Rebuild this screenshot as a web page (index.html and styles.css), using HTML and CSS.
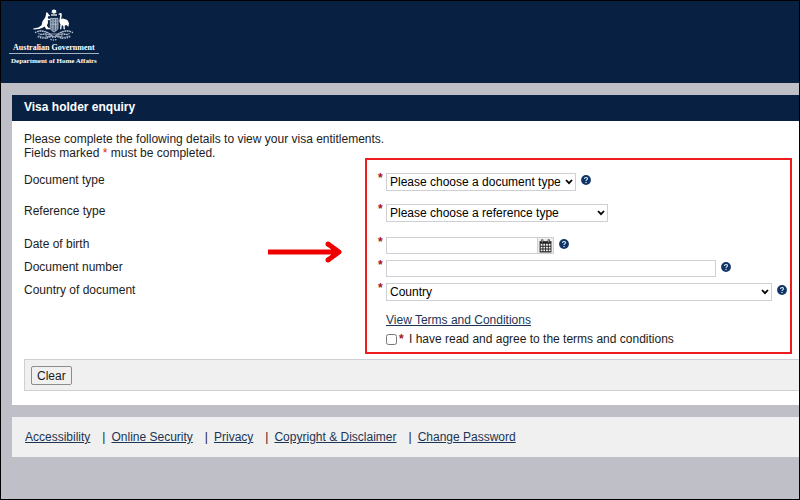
FILE: index.html
```html
<!DOCTYPE html>
<html lang="en">
    <head>
        <meta charset="UTF-8">
        <meta name="viewport" content="width=device-width, initial-scale=1.0">
        <title>Visa holder enquiry</title>
        <link rel="stylesheet" href="styles.css">
    </head>
    <body>
        <svg class="symbols" aria-hidden="true">
            <symbol id="help-icon" viewBox="0 0 10 10">
                <circle cx="5" cy="5" r="4.9" fill="#0f3566"/>
                <path d="M3.5 3.9C3.5 2 6.5 2 6.5 3.8C6.5 4.9 5 4.8 5 6" fill="none" stroke="#dfe8f2" stroke-width="1.1"/>
                <circle cx="5" cy="7.5" r=".7" fill="#dfe8f2"/>
            </symbol>
        </svg>
        <header class="header">
            <div class="brand">
                <svg class="crest" viewBox="0 0 44 32" aria-hidden="true">
                    <path d="M22 0L22.8 1.1L24.2 .9L23.9 2.2L24.8 3.2L23.5 3.7L22.9 4.9L22 4L21.1 4.9L20.5 3.7L19.2 3.2L20.1 2.2L19.8 .9L21.2 1.1Z" fill="#fff"/>
                    <path d="M19 6H25" stroke="#dfe4ea" stroke-width="1.4"/>
                    <!-- kangaroo -->
                    <path d="M14.2 3L15.2 4.1L16 3.4L16.3 5L18 6.4L17.6 7.3L16 7.3L15.9 9.5L18.4 10L18.3 11L15.8 11.2L16 14L14.9 16.4L16.2 18.6L18 19.3V20.2H14.2L12.6 17.4L10.6 18.8L7 20L1.5 20.4L1.2 19.4L6.4 18.6L9.6 16.2L10.4 12.4L13.3 8.2L14 5.6Z" fill="#fff"/>
                    <!-- emu -->
                    <path d="M26.2 5.2L28 3.9L29.5 4.3L29.8 6.2L29.2 10L31 9.4L35.4 11.1L37 14.2L36.3 18L34.6 16.1L32.6 16.8L33 20.2H31.6L31.2 16.7L29.8 16.2L29.3 20.2H28L28.4 15.6L27.3 12.6L28.2 6.1Z" fill="#fff"/>
                    <!-- shield -->
                    <path d="M18.3 9.4H26V18.8C26 21 23.7 22 22.1 23C20.5 22 18.3 21 18.3 18.8Z" fill="#5c6f89" stroke="#c3cbd6" stroke-width=".8"/>
                    <path d="M20.9 9.8V21.6M23.5 9.8V21.6M18.6 15.2H25.8M19.2 12.1H20.4M21.6 12.3H22.9M24.2 12.1H25.3M19.2 18.1H20.4M24.2 18.1H25.3" stroke="#c3cbd6" stroke-width=".7"/>
                    <!-- wattle and scroll -->
                    <g fill="none" stroke="#8d9bb0" stroke-width="1">
                        <path d="M21.5 27.5C17 23 10 20.6 4.8 22.6M19 25.4C15 29 10 29 6.5 26.6M15 23.4C12 26 8 25.7 5.8 24.2M17 27L14.2 30"/>
                        <path d="M22.5 27.5C27 23 34 20.6 39.2 22.6M25 25.4C29 29 34 29 37.5 26.6M29 23.4C32 26 36 25.7 38.2 24.2M27 27L29.8 30"/>
                        <path d="M14 25.8L18.5 25L25.5 25L30 25.8L29.5 28L25 27.4L19 27.4L14.5 28Z"/>
                    </g>
                    <g fill="none" stroke="#b8c3d0" stroke-width="1.5" stroke-linecap="round" stroke-dasharray=".1 2.3">
                        <path d="M3.6 23.4C10 20 17 23.4 21 28.5M6.2 27.8C10 29.8 14.5 29.5 18 28M9 25.6L15 25"/>
                        <path d="M40.4 23.4C34 20 27 23.4 23 28.5M37.8 27.8C34 29.8 29.5 29.5 26 28M35 25.6L29 25"/>
                        <path d="M19 30.5L22 31L25 30.5"/>
                    </g>
                </svg>
                <span class="brand-government">Australian Government</span>
                <span class="brand-department">Department of Home Affairs</span>
            </div>
        </header>
        <main class="panel">
            <h1 class="panel-title">Visa holder enquiry</h1>
            <form class="enquiry">
                <p class="intro">Please complete the following details to view your visa entitlements.<br>
                Fields marked <span class="marked">*</span> must be completed.</p>
                <div class="fields">
                    <div class="row row-tall">
                        <label for="document-type">Document type</label>
                        <div class="control">
                            <span class="required">*</span>
                            <select class="document-type" id="document-type"><option>Please choose a document type</option></select>
                            <svg class="help"><use href="#help-icon"/></svg>
                        </div>
                    </div>
                    <div class="row row-reference">
                        <label for="reference-type">Reference type</label>
                        <div class="control">
                            <span class="required">*</span>
                            <select class="reference-type" id="reference-type"><option>Please choose a reference type</option></select>
                        </div>
                    </div>
                    <div class="row">
                        <label for="birth-date">Date of birth</label>
                        <div class="control">
                            <span class="required">*</span>
                            <div class="date-group">
                                <input class="birth-date" id="birth-date" type="text">
                                <button class="calendar" type="button" aria-label="Choose date">
                                    <svg viewBox="0 0 12 13" aria-hidden="true">
                                        <path d="M.5 2H11.5V12.5H.5Z" fill="#222"/>
                                        <path d="M3 .5V3M9 .5V3" stroke="#222" stroke-width="2"/>
                                        <path d="M3 1V3M9 1V3" stroke="#eee" stroke-width=".7"/>
                                        <path d="M1.5 4.5H3.2V6.2H1.5ZM4 4.5H5.7V6.2H4ZM6.5 4.5H8.2V6.2H6.5ZM9 4.5H10.7V6.2H9ZM1.5 7.1H3.2V8.8H1.5ZM4 7.1H5.7V8.8H4ZM6.5 7.1H8.2V8.8H6.5ZM9 7.1H10.7V8.8H9ZM1.5 9.7H3.2V11.4H1.5ZM4 9.7H5.7V11.4H4ZM6.5 9.7H8.2V11.4H6.5ZM9 9.7H10.7V11.4H9Z" fill="#f3f1ee"/>
                                    </svg>
                                </button>
                            </div>
                            <svg class="help"><use href="#help-icon"/></svg>
                        </div>
                    </div>
                    <div class="row">
                        <label for="document-number">Document number</label>
                        <div class="control">
                            <span class="required">*</span>
                            <input class="document-number" id="document-number" type="text">
                            <svg class="help"><use href="#help-icon"/></svg>
                        </div>
                    </div>
                    <div class="row">
                        <label for="country">Country of document</label>
                        <div class="control">
                            <span class="required">*</span>
                            <select class="country" id="country"><option>Country</option></select>
                            <svg class="help"><use href="#help-icon"/></svg>
                        </div>
                    </div>
                    <div class="terms">
                        <a href="#">View Terms and Conditions</a>
                        <div class="agree">
                            <input type="checkbox" id="agree">
                            <span class="required">*</span>
                            <label for="agree">I have read and agree to the terms and conditions</label>
                        </div>
                    </div>
                    <div class="highlight"></div>
                    <svg class="arrow" viewBox="0 0 74 22" aria-hidden="true">
                        <path d="M0 11H70M60 3L71 11L60 19" fill="none" stroke="#ee0000" stroke-width="5" stroke-linejoin="round"/>
                        <path d="M60 3V3M60 19V19" stroke="#ee0000" stroke-width="5" stroke-linecap="round"/>
                    </svg>
                </div>
                <div class="actions">
                    <button class="clear" type="reset">Clear</button>
                </div>
            </form>
        </main>
        <footer class="footer">
            <a href="#">Accessibility</a>
            <a href="#">Online Security</a>
            <a href="#">Privacy</a>
            <a href="#">Copyright &amp; Disclaimer</a>
            <a href="#">Change Password</a>
        </footer>
    </body>
</html>
```

FILE: styles.css
```css
:root {
    --navy: #082143;
    --line: #cfcfd6;
}

* {
    box-sizing: border-box;
}

body {
    margin: 0;
    min-height: 100vh;
    border: 1px solid #000;
    background: #bfbfc8;
    color: #1c1c1c;
    font-family: "Liberation Sans", Arial, sans-serif;
    font-size: 12px;
    line-height: 14px;
}

a {
    color: #1c3554;
}

.symbols {
    display: none;
}

.header {
    padding: 8px;
    height: 82px;
    background: var(--navy);
}

.brand {
    display: flex;
    flex-direction: column;
    align-items: center;
    width: fit-content;
    color: #fff;
    font-family: "Liberation Serif", "Times New Roman", serif;
    font-size: 8px;
    font-weight: bold;
    line-height: 11px;
}

.crest {
    width: 44px;
    height: 32px;
}

.brand-department {
    border-top: 1px solid #a5b0be;
    padding: 2px 2px 0;
    font-size: 7px;
}

.brand-government {
    padding-top: 1px;
}

.panel {
    margin: 12px 0 12px 11px;
    background: #fff;
}

.panel-title {
    margin: 0;
    padding: 5px 12px 7px;
    background: var(--navy);
    color: #fff;
    font-size: 12px;
    line-height: 14px;
}

.enquiry {
    padding: 11px 0 14px 12px;
}

.intro {
    margin: 0;
}

.marked {
    color: #e02020;
}

.fields {
    position: relative;
    padding-top: 13px;
}

.row {
    display: grid;
    grid-template-columns: 354px 1fr;
    min-height: 23px;
}

.row-tall {
    min-height: 31px;
}

.row-reference {
    min-height: 33px;
}

.control {
    display: flex;
    align-items: flex-start;
}

.required {
    width: 8px;
    color: #a3141c;
    font-weight: bold;
    line-height: 10px;
}

select, input, button {
    font: inherit;
    color: inherit;
}

select {
    appearance: none;
    height: 18px;
    border: 1px solid var(--line);
    border-radius: 0;
    padding: 0 14px 0 3px;
    background: #fff url("data:image/svg+xml,%3Csvg xmlns='http://www.w3.org/2000/svg' viewBox='0 0 8 6'%3E%3Cpath d='M1 1L4 4.2L7 1' fill='none' stroke='%23000' stroke-width='1.8'/%3E%3C/svg%3E") no-repeat right 2px center / 8px 6px;
    color: #000;
}

input[type="text"] {
    height: 17px;
    border: 1px solid var(--line);
    padding: 0 4px;
}

.document-type {
    width: 190px;
}

.reference-type {
    width: 222px;
}

.birth-date {
    width: 152px;
}

.document-number {
    width: 330px;
}

.country {
    width: 386px;
}

.date-group {
    display: flex;
}

.calendar {
    display: flex;
    align-items: center;
    width: 16px;
    height: 17px;
    border: 1px solid var(--line);
    border-left: 0;
    padding: 1px;
    background: #eee;
}

.calendar svg {
    width: 13px;
    height: 14px;
}

.help {
    width: 10px;
    height: 10px;
    margin: 2px 0 0 5px;
}

.terms {
    margin: 7px 0 0 362px;
}

.agree {
    display: flex;
    align-items: center;
    margin-top: 5px;
}

.agree input {
    width: 11px;
    height: 11px;
    margin: 0 2px 0 0;
}

.agree .required {
    width: 10px;
}

/* callout drawn over the form */
.highlight {
    position: absolute;
    top: -2px;
    right: 7px;
    bottom: -8px;
    left: 341px;
    border: 2px solid #ee1c1c;
    pointer-events: none;
}

.arrow {
    position: absolute;
    top: 81px;
    left: 244px;
    width: 74px;
    height: 22px;
}

.actions {
    margin-top: 13px;
    border: 1px solid var(--line);
    border-right: 0;
    padding: 6px 6px 5px;
    background: #f0f0f0;
}

.clear {
    display: block;
    height: 19px;
    border: 1px solid #8c8c8c;
    border-radius: 2px;
    padding: 0 5px;
    background: #f0f0f0;
}

.footer {
    display: flex;
    flex-wrap: wrap;
    margin-left: 11px;
    padding: 13px;
    background: #f0f0f0;
}

.footer a + a::before {
    content: "|";
    display: inline-block;
    margin: 0 6px 0 12px;
    color: #1c1c1c;
}
```
